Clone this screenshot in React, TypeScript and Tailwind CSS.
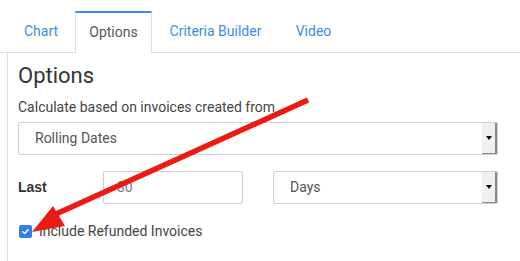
import React from "react"

const tabs = [
  { label: "Chart", w: "w-[68px]" },
  { label: "Options", w: "w-[77px]", active: true },
  { label: "Criteria Builder", w: "w-[127px]" },
  { label: "Video", w: "w-[69px]" },
]

function SelectBox({ value, className }: { value: string; className: string }) {
  return (
    <div className={`flex h-[33px] items-stretch rounded-[2px] border border-[#cfcfcf] bg-white ${className}`}>
      <div className="flex flex-1 items-center pl-[16px] text-[14px] text-[#555]">
        {value}
      </div>
      <div className="flex w-[15px] items-center justify-center border-r-2 border-b border-[#8a8a8a] bg-[#f0f0f0]">
        <div className="h-0 w-0 border-x-[3px] border-t-[4px] border-x-transparent border-t-black" />
      </div>
    </div>
  )
}

export default function App() {
  return (
    <div className="relative h-[261px] w-[520px] overflow-hidden bg-white font-['Roboto',sans-serif]">
      {/* Tabs */}
      <div className="flex border-b border-[#dddddd] pl-[7px] pt-[11px]">
        {tabs.map((t) =>
          t.active ? (
            <div
              key={t.label}
              className={`${t.w} -mb-px flex h-[42px] items-center justify-center border-x border-t-2 border-x-[#dddddd] border-t-[#3a8ee6] bg-white pb-px text-[14px] text-[#555]`}
            >
              {t.label}
            </div>
          ) : (
            <div key={t.label} className={`${t.w} flex h-[41px] items-center justify-center text-[14px] text-[#3a8ee6]`}>
              {t.label}
            </div>
          )
        )}
      </div>

      {/* Panel */}
      <div className="ml-[7px] h-[300px] border-l border-[#dddddd] pl-[10px] pt-[10px]">
        <h2 className="text-[22px] leading-[26px] text-[#333]">Options</h2>
        <p className="mt-[8px] text-[14px] leading-[20px] text-[#444]">Calculate based on invoices created from</p>

        <SelectBox value="Rolling Dates" className="mt-[5px] w-[480px]" />

        <div className="mt-[16px] flex items-center">
          <span className="w-[85px] text-[14px] font-bold text-[#333] font-['Liberation_Sans',Arial,sans-serif]">Last</span>
          <div className="flex h-[33px] w-[140px] items-center rounded-[2px] border border-[#cfcfcf] pl-[13px] text-[14px] text-[#777]">
            30
          </div>
          <SelectBox value="Days" className="ml-[30px] w-[225px]" />
        </div>

        <label className="mt-[17px] flex items-center gap-[7px] text-[14px] leading-[20px] text-[#444]">
          <span className="ml-px flex h-[13px] w-[13px] items-center justify-center rounded-[2px] bg-[#2f80e8]">
            <svg width="9" height="9" viewBox="0 0 10 10">
              <path d="M2 5.2 L4.2 7.3 L8 2.8" fill="none" stroke="white" strokeWidth="1.6" strokeLinecap="round" strokeLinejoin="round" />
            </svg>
          </span>
          Include Refunded Invoices
        </label>
      </div>

      {/* Red annotation arrow */}
      <svg className="pointer-events-none absolute left-0 top-0" width="520" height="261">
        <line x1="308" y1="100" x2="56" y2="214" stroke="#ec1a12" strokeWidth="5.5" strokeLinecap="butt" />
        <polygon points="32,232 53,206 65,226" fill="#ec1a12" />
      </svg>
    </div>
  )
}
